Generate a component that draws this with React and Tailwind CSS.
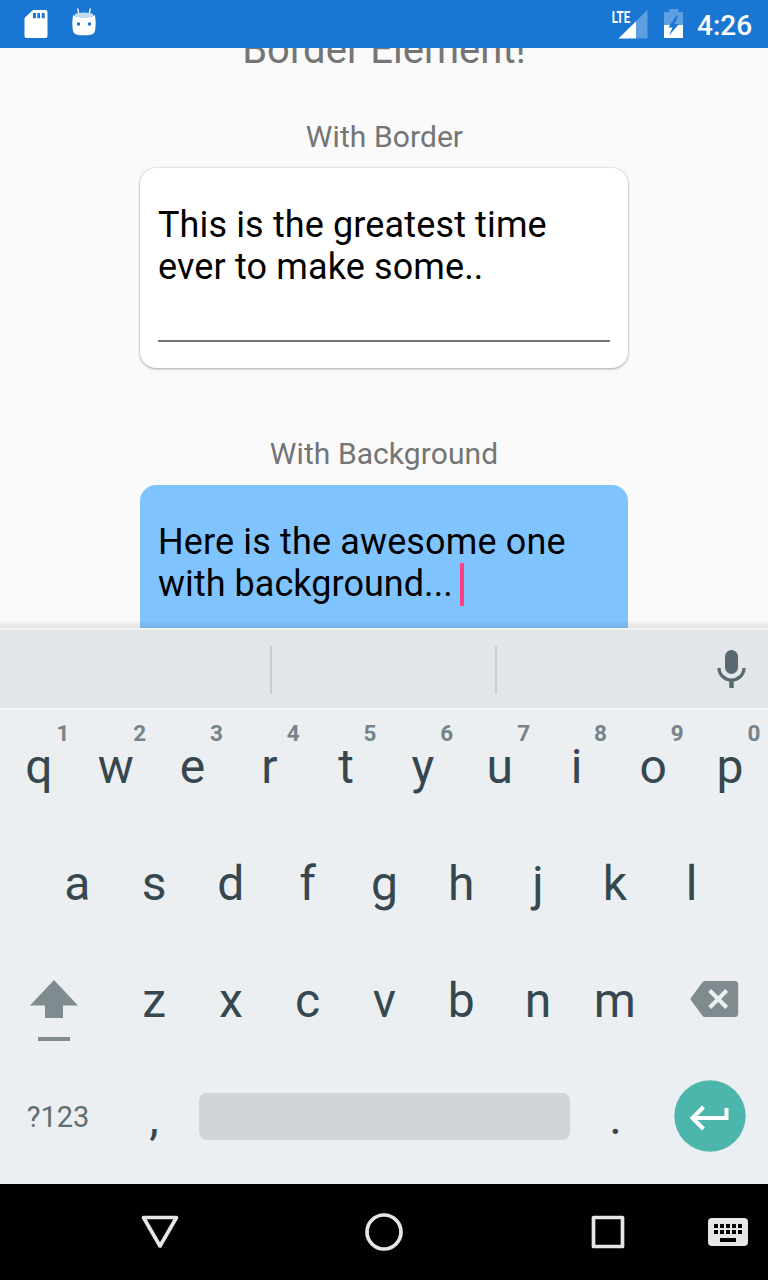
import React from 'react';

const topRow = [...'qwertyuiop'].map((letter, i) => ({ letter, hint: '1234567890'[i] }));

function StatusBar() {
  return (
    <header className="flex h-12 items-center bg-[#1976d2] font-medium text-white">
      <svg className="h-12 w-28" viewBox="0 0 112 48" fill="#fff">
        <path
          fillRule="evenodd"
          d="M33 10H45.5Q47.5 10 47.5 12V36Q47.5 38 45.5 38H26.5Q24.5 38 24.5 36V18ZM33 13V18.3H36V13ZM37.3 13V18.3H40V13ZM41.8 13V18.3H44.7V13Z"
        />
        <path d="M77.6 8.500l1.400 6M90.400 8.500l-1.400 6" stroke="#fff" strokeWidth="1.300" fill="none" />
        <path
          fillRule="evenodd"
          d="M73 15Q76 17.500 84 17.500T95 15Q96.200 23 95.300 29Q95 34 91 34.700Q84 36 77 34.700Q73 34 72.700 29Q71.800 23 73 15ZM77 22.500v3h3v-3zM88 22.500v3h3v-3z"
        />
        <ellipse cx="84" cy="15.100" rx="9.600" ry="2.700" fill="#c5dbf3" />
      </svg>
      <svg className="ml-auto h-12 w-[89px]" viewBox="608 0 89 48" fill="#fff">
        <text
          x="611.700"
          y="22.500"
          fontFamily="Roboto"
          fontWeight="700"
          fontSize="17"
          textLength="18.500"
          lengthAdjust="spacingAndGlyphs"
        >
          LTE
        </text>
        <path d="M636 21.300L647.500 9.500V38.500H636Z" opacity=".3" />
        <path d="M618.500 38.500L636 21.300V38.500Z" />
        <path d="M669.500 9h9v3h4.500v13h-19v-13h5.500z" opacity=".3" />
        <path d="M664 25h19v13h-19z" />
        <path d="M676.500 15.500L668.300 27.500H672.500L669 35.500L679 24H674.500L678 16Z" fill="#1976d2" />
      </svg>
      <span className="w-[71px] pt-0.5 text-[28px] leading-[33px]">4:26</span>
    </header>
  );
}

function Content() {
  return (
    <main className="relative flex h-[580px] flex-col items-center overflow-hidden bg-[#fafafa] text-[#757575]">
      <h1 className="-mt-[22px] h-12 shrink-0 text-[40px] leading-[48px]">Border Element!</h1>
      <p className="mt-[45px] h-9 shrink-0 pl-px text-[30px] leading-9 tracking-[0.08px]">With Border</p>
      <section className="mt-[13px] h-[200px] w-[488px] shrink-0 rounded-2xl bg-white px-[18px] pt-9 text-black shadow-[0_1px_3px_rgba(0,0,0,0.3),0_0_2px_rgba(0,0,0,0.15)]">
        <div className="h-[138px] border-b-2 border-[#757575] text-4xl leading-[42px] tracking-[0.13px]">
          This is the greatest time
          <br />
          ever to make some..
        </div>
      </section>
      <p className="mt-[68px] h-9 shrink-0 text-[30px] leading-9 tracking-[0.08px]">With Background</p>
      <section className="mt-[13px] h-[200px] w-[488px] shrink-0 rounded-2xl bg-[#80c4ff] px-[18px] pt-9 text-4xl leading-[42px] tracking-[0.14px] text-black">
        Here is the awesome one
        <div className="flex">
          <span className="w-[302px] tracking-[0.04px]">with background...</span>
          <span className="h-[43px] w-1 bg-[#ff4081]" />
        </div>
      </section>
      <div className="absolute inset-x-0 bottom-0 h-2 bg-gradient-to-b from-transparent to-black/10" />
    </main>
  );
}

function SuggestionStrip() {
  return (
    <div className="flex h-[82px] items-center border-y-2 border-t-[#eff1f2] border-b-[#f5f7f8] bg-[#e2e6e9]">
      <div className="mt-0.5 h-12 w-[272px] border-r-2 border-[#c8cccf]" />
      <div className="mt-0.5 h-12 w-[225px] border-r-2 border-[#c8cccf]" />
      <svg className="ml-auto h-12 w-[72px]" viewBox="696 645 72 48">
        <rect x="725" y="650" width="13" height="24" rx="6.500" fill="#5a686f" />
        <path d="M719 668a12.500 12 0 0 0 25 0" fill="none" stroke="#5a686f" strokeWidth="3.200" />
        <path d="M731.500 680v8" stroke="#5a686f" strokeWidth="4.500" />
      </svg>
    </div>
  );
}

function Key({ letter, hint }) {
  return (
    <div className="relative flex h-full w-[76.8px] shrink-0 items-center justify-center pl-px">
      {letter}
      {hint && (
        <span className="absolute top-[9px] right-[7.5px] text-[22.5px] leading-[28px] font-bold text-[#75838a]">
          {hint}
        </span>
      )}
    </div>
  );
}

function Keyboard() {
  return (
    <div className="h-[474px] bg-[#ebeff2] text-[48px] leading-[56px] text-[#37474f]">
      <div className="mb-0.5 flex h-[113px]">
        {topRow.map((k) => (
          <Key key={k.letter} {...k} />
        ))}
      </div>
      <div className="flex h-[117px] justify-center">
        {[...'asdfghjkl'].map((l) => (
          <Key key={l} letter={l} />
        ))}
      </div>
      <div className="flex h-[117px]">
        <svg className="h-[117px] w-[115.2px] shrink-0" viewBox="0 942 115.2 117" fill="#808b8f">
          <path d="M54 980L78 1005.500H63V1018H45V1005.500H30Z" />
          <path d="M38 1037h32v4H38z" />
        </svg>
        {[...'zxcvbnm'].map((l) => (
          <Key key={l} letter={l} />
        ))}
        <svg className="h-[117px] w-[115.2px] shrink-0" viewBox="652.8 942 115.2 117">
          <path
            d="M705 981H734.500Q738 981 738 984.500V1013.500Q738 1017 734.500 1017H705Q703 1017 702 1015.500L690 999L702 982.500Q703 981 705 981Z"
            fill="#808b8f"
          />
          <path d="M709.500 990.500L726.500 1007.500M726.500 990.500L709.500 1007.500" stroke="#ebeff2" strokeWidth="4" />
        </svg>
      </div>
      <div className="flex h-[117px] items-center">
        <span className="w-[115px] shrink-0 pb-0.5 pl-px text-center text-[29px] leading-[34px] text-[#5f6e75]">
          ?123
        </span>
        <Key letter="," />
        <div className="mb-0.5 ml-[7px] h-[47px] w-[371px] shrink-0 rounded-lg bg-[#d0d5d8]" />
        <div className="ml-[7px]">
          <Key letter="." />
        </div>
        <svg className="ml-auto h-[117px] w-[114px] shrink-0" viewBox="654 1059 114 117">
          <circle cx="710" cy="1116" r="35.700" fill="#4db6ac" />
          <path d="M726.500 1108V1118H693M703.500 1107L692.500 1118L703.500 1129" fill="none" stroke="#fff" strokeWidth="4" />
        </svg>
      </div>
    </div>
  );
}

function NavigationBar() {
  return (
    <footer className="h-24 bg-black">
      <svg className="h-24 w-full" viewBox="0 1184 768 96" fill="none" stroke="#e6e6e6" strokeWidth="3.700" strokeLinejoin="round">
        <path d="M143.500 1217.500H176.500L160 1246Z" />
        <circle cx="384" cy="1232" r="17" />
        <rect x="593.500" y="1217.500" width="29" height="29" />
        <rect x="708" y="1218" width="40" height="28" rx="4" fill="#e6e6e6" stroke="none" />
        <path d="M714 1226H742M714 1232H742" stroke="#000" strokeWidth="4" strokeDasharray="4 2" />
        <path d="M720 1240H736" stroke="#000" strokeWidth="4" />
      </svg>
    </footer>
  );
}

export default function App() {
  return (
    <div className="h-[1280px] w-[768px] overflow-hidden font-[Roboto,sans-serif]">
      <StatusBar />
      <Content />
      <SuggestionStrip />
      <Keyboard />
      <NavigationBar />
    </div>
  );
}
